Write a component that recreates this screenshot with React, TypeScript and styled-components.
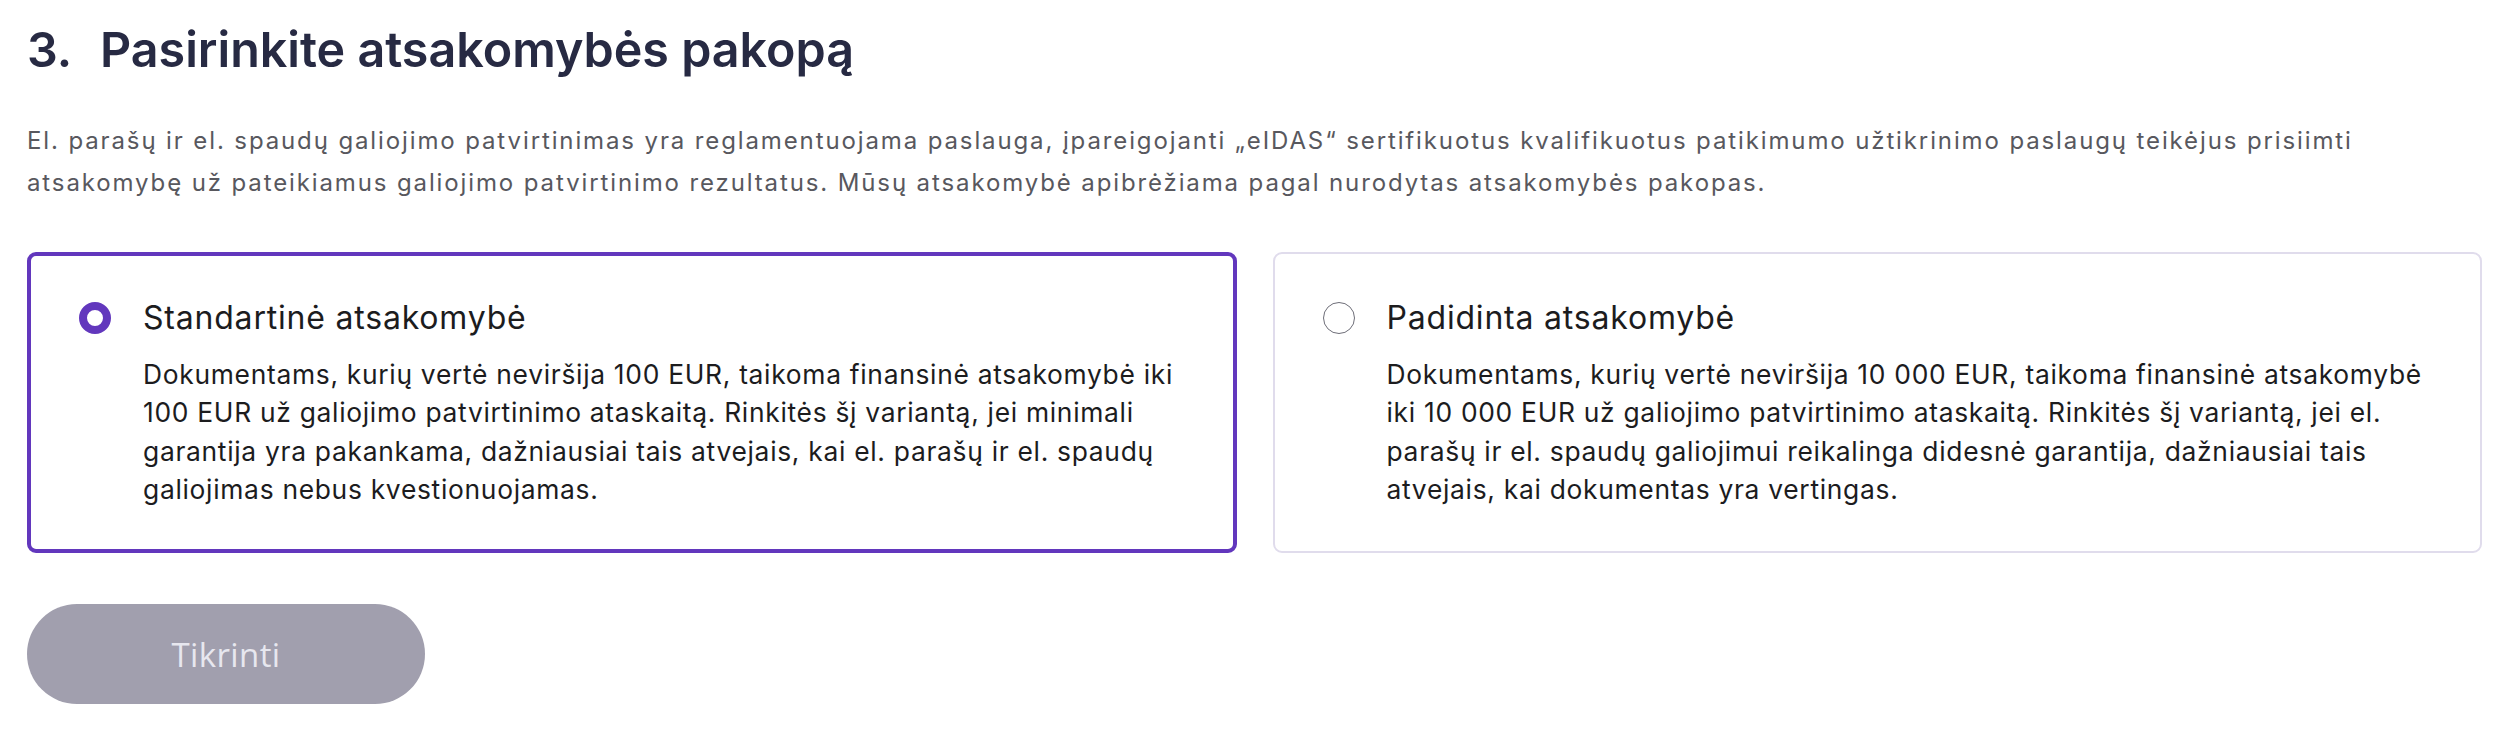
import React, { useState } from 'react';
import styled, { createGlobalStyle } from 'styled-components';

const GlobalStyle = createGlobalStyle`
  body {
    margin: 0;
    background: #fff;
    font-family: Inter, "Noto Sans", sans-serif;
  }
`;

const Page = styled.div`
  padding: 21px 32px 0 27px;
`;

const Heading = styled.h1`
  margin: 0;
  font-size: 48.4px;
  line-height: 58px;
  font-weight: 600;
  color: #272a43;
  display: flex;
`;

const StepNumber = styled.span`
  width: 73px;
  flex-shrink: 0;
`;

const Intro = styled.p`
  margin: 41px 0 0;
  font-size: 24px;
  line-height: 42px;
  letter-spacing: 1.88px;
  color: #58585e;
`;

const Options = styled.div`
  margin-top: 48px;
  display: grid;
  grid-template-columns: 1fr 1fr;
  gap: 36px;
`;

const Card = styled.label<{ $active: boolean }>`
  display: flex;
  gap: 32px;
  align-items: flex-start;
  box-sizing: border-box;
  height: 301px;
  padding: ${p => (p.$active ? '38px 44px 0 48px' : '40px 44px 0 48px')};
  border: ${p => (p.$active ? '4px solid #6237bd' : '2px solid #e0dcec')};
  border-radius: 9px;
  background: #fff;
  cursor: pointer;
`;

const Radio = styled.span<{ $active: boolean }>`
  flex-shrink: 0;
  box-sizing: border-box;
  width: 32px;
  height: 32px;
  margin-top: 8px;
  border-radius: 50%;
  border: ${p => (p.$active ? '8px solid #6237bd' : '1.5px solid #6e6e78')};
  background: #fff;
`;

const CardBody = styled.div`
  flex: 1;
`;

const CardTitle = styled.div`
  font-size: 32px;
  line-height: 48px;
  letter-spacing: 0.8px;
  color: #1c1c1e;
`;

const CardText = styled.div`
  margin-top: 13px;
  font-size: 26.4px;
  line-height: 38.4px;
  letter-spacing: 0.7px;
  color: #1c1c1e;
`;

const SubmitButton = styled.button`
  margin-top: 51px;
  width: 398px;
  height: 100px;
  border: none;
  border-radius: 50px;
  background: #a19fae;
  color: #e7e7ef;
  font-family: "Open Sans", "Noto Sans", sans-serif;
  font-size: 33px;
  letter-spacing: 0.4px;
  cursor: not-allowed;
`;

const options = [
  {
    id: 'standard',
    title: 'Standartinė atsakomybė',
    text: 'Dokumentams, kurių vertė neviršija 100 EUR, taikoma finansinė atsakomybė iki 100 EUR už galiojimo patvirtinimo ataskaitą. Rinkitės šį variantą, jei minimali garantija yra pakankama, dažniausiai tais atvejais, kai el. parašų ir el. spaudų galiojimas nebus kvestionuojamas.',
  },
  {
    id: 'increased',
    title: 'Padidinta atsakomybė',
    text: 'Dokumentams, kurių vertė neviršija 10 000 EUR, taikoma finansinė atsakomybė iki 10 000 EUR už galiojimo patvirtinimo ataskaitą. Rinkitės šį variantą, jei el. parašų ir el. spaudų galiojimui reikalinga didesnė garantija, dažniausiai tais atvejais, kai dokumentas yra vertingas.',
  },
];

const App: React.FC = () => {
  const [selected, setSelected] = useState('standard');

  return (
    <Page>
      <GlobalStyle />
      <Heading>
        <StepNumber>3.</StepNumber>
        Pasirinkite atsakomybės pakopą
      </Heading>
      <Intro>
        El. parašų ir el. spaudų galiojimo patvirtinimas yra reglamentuojama paslauga, įpareigojanti „eIDAS“ sertifikuotus kvalifikuotus patikimumo užtikrinimo paslaugų teikėjus prisiimti atsakomybę už pateikiamus galiojimo patvirtinimo rezultatus. Mūsų atsakomybė apibrėžiama pagal nurodytas atsakomybės pakopas.
      </Intro>
      <Options>
        {options.map(o => (
          <Card key={o.id} $active={selected === o.id} onClick={() => setSelected(o.id)}>
            <Radio $active={selected === o.id} />
            <CardBody>
              <CardTitle>{o.title}</CardTitle>
              <CardText>{o.text}</CardText>
            </CardBody>
          </Card>
        ))}
      </Options>
      <SubmitButton disabled>Tikrinti</SubmitButton>
    </Page>
  );
};

export default App;
